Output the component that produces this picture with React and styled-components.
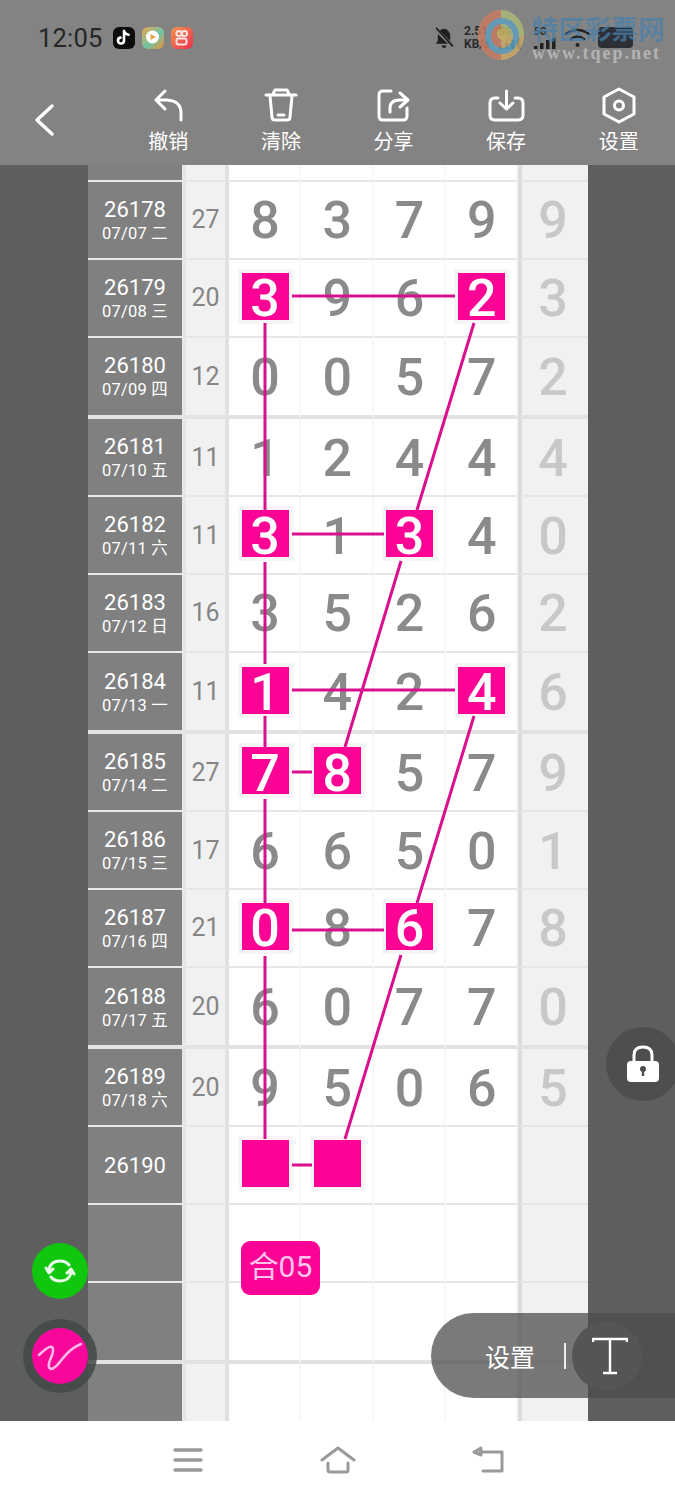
import React from 'react';
import styled, { createGlobalStyle } from 'styled-components';

const Global = createGlobalStyle`
  html, body { margin: 0; padding: 0; background: #fff; }
  * { box-sizing: border-box; }
  #root { width: 675px; height: 1500px; overflow: hidden; }
`;

const Page = styled.div`
  position: relative;
  width: 675px;
  height: 1500px;
  overflow: hidden;
  display: flex;
  flex-direction: column;
  font-family: Roboto, "Noto Sans CJK SC", sans-serif;
`;

const Top = styled.header`
  height: 165px;
  flex: none;
  background: #838383;
  display: flex;
  flex-direction: column;
`;

const StatusBar = styled.div`
  height: 75px;
  padding: 0 42px 0 38px;
  display: flex;
  align-items: center;
  gap: 7px;
  color: #262626;
`;

const Time = styled.span`
  font-size: 25.5px;
  letter-spacing: 0.2px;
  margin-right: 3px;
`;

const AppBadge = styled.span`
  width: 22px;
  height: 22px;
  border-radius: 6px;
  background: ${p => p.$bg};
  display: flex;
  align-items: center;
  justify-content: center;
  flex: none;
`;

const StatusRight = styled.div`
  margin-left: auto;
  display: flex;
  align-items: center;
`;

const BellSlot = styled.span`
  width: 31px;
  display: flex;
`;

const Speed = styled.span`
  font-size: 12px;
  line-height: 13px;
  font-weight: 700;
  width: 35px;
  color: #2a2a2a;
`;

const NetGroup = styled.span`
  width: ${p => p.$w}px;
  display: flex;
  flex-direction: column;
  gap: 1px;
  font-size: 10px;
  line-height: 10px;
  font-weight: 700;
  color: #2a2a2a;
`;

const Battery = styled.span`
  width: 35px;
  height: 21px;
  border-radius: 4px;
  background: #2c3036;
  margin-left: 7px;
`;

const Toolbar = styled.nav`
  height: 90px;
  display: flex;
  align-items: stretch;
`;

const Back = styled.button`
  width: 112px;
  border: 0;
  background: none;
  padding: 0 0 0 34px;
  display: flex;
  align-items: center;
  justify-content: flex-start;
`;

const Tool = styled.div`
  width: 112.6px;
  display: flex;
  flex-direction: column;
  align-items: center;
  padding-top: 12px;
  color: #fff;
  font-size: 20px;
  line-height: 26px;
`;

const ToolIcon = styled.span`
  height: 36px;
  margin-bottom: 6px;
  display: flex;
  align-items: center;
  justify-content: center;
`;

const Board = styled.main`
  position: relative;
  flex: 1;
  min-height: 0;
  display: flex;
  background: #5e5e5e;
  overflow: hidden;
`;

const Table = styled.div`
  margin-left: 88px;
  width: 500px;
  flex: none;
  display: flex;
  flex-direction: column;
`;

const Row = styled.div`
  flex: none;
  height: ${p => p.$h}px;
  display: grid;
  grid-template-columns: 94px 47px repeat(4, 72.25px) 70px;
`;

const IssueCell = styled.div`
  background: #808080;
  color: #fff;
  border-bottom: ${p => (p.$end ? '4px solid #e4e4e4' : '2px solid #e8e8e8')};
  display: flex;
  flex-direction: column;
  align-items: center;
  justify-content: center;
  padding-top: 1px;
`;

const Issue = styled.div`
  font-size: 22px;
  line-height: 27px;
`;

const DateText = styled.div`
  font-size: 16.5px;
  line-height: 22px;
  letter-spacing: 0.2px;
`;

const SumCell = styled.div`
  background: #f1f1f1;
  border-left: 4px solid #e6e6e6;
  border-right: 4px solid #e2e2e2;
  border-bottom: ${p => (p.$end ? '4px solid #e2e2e2' : '2px solid #e6e6e6')};
  color: #858585;
  font-size: 25px;
  display: flex;
  align-items: center;
  justify-content: center;
`;

const NumCell = styled.div`
  background: #fff;
  border-right: 2px solid #f7f7f7;
  border-bottom: ${p => (p.$end ? '4px solid #e2e2e2' : '2px solid #e6e6e6')};
  padding: 2px 0 0 2px;
  color: #8a8a8a;
  font-size: 52px;
  font-weight: 500;
  display: flex;
  align-items: center;
  justify-content: center;
`;

const Marked = styled.div`
  width: 47px;
  height: 47px;
  background: #fb0495;
  color: #fff;
  font-weight: 500;
  box-shadow: 0 0 0 4px #f9f4f8;
  padding-top: 5px;
  display: flex;
  align-items: center;
  justify-content: center;
  margin-bottom: 5px;
`;

const TailCell = styled.div`
  background: #f1f1f1;
  border-left: 4px solid #dcdcdc;
  border-bottom: ${p => (p.$end ? '4px solid #e2e2e2' : '2px solid #e6e6e6')};
  padding: 2px 4px 0 0;
  color: #c8c8c8;
  font-size: 52px;
  font-weight: 500;
  display: flex;
  align-items: center;
  justify-content: center;
`;

const Lines = styled.svg`
  position: absolute;
  left: 0;
  top: 0;
  pointer-events: none;
`;

const Tag = styled.div`
  position: absolute;
  left: 241px;
  top: 1076px;
  width: 79px;
  height: 54px;
  border-radius: 9px;
  background: #fb0495;
  color: #ffc4ec;
  font-size: 30px;
  padding-bottom: 8px;
  display: flex;
  align-items: center;
  justify-content: center;
`;

const RoundButton = styled.div`
  position: absolute;
  left: ${p => p.$x - 28}px;
  top: ${p => p.$y - 28}px;
  width: 56px;
  height: 56px;
  border-radius: 50%;
  background: ${p => p.$bg};
  box-shadow: ${p => (p.$halo ? '0 0 0 9px rgba(66,72,72,.85)' : 'none')};
  display: flex;
  align-items: center;
  justify-content: center;
`;

const LockButton = styled.div`
  position: absolute;
  left: 606px;
  top: 862px;
  width: 74px;
  height: 74px;
  border-radius: 50%;
  background: #4e4e4e;
  display: flex;
  align-items: center;
  justify-content: center;
`;

const TextPill = styled.div`
  position: absolute;
  left: 431px;
  right: 0;
  top: 1148px;
  height: 85px;
  border-radius: 43px 0 0 43px;
  background: rgba(75, 75, 75, 0.74);
  color: #fff;
  display: flex;
  align-items: center;
  padding-left: 54px;
  font-size: 25px;
`;

const PillDivider = styled.span`
  width: 2px;
  height: 26px;
  background: #eee;
  margin-left: 29px;
`;

const TextKnob = styled.span`
  width: 70px;
  height: 70px;
  border-radius: 50%;
  background: #555;
  margin-left: 6px;
  padding-left: 6px;
  display: flex;
  align-items: center;
  justify-content: center;
`;

const BottomNav = styled.footer`
  height: 79px;
  flex: none;
  background: #fff;
  display: flex;
  align-items: center;
  justify-content: center;
  padding-bottom: 1px;
`;

const NavSlot = styled.div`
  width: 150px;
  display: flex;
  justify-content: center;
`;

const Watermark = styled.div`
  position: absolute;
  left: 476px;
  top: 8px;
  width: 199px;
  height: 70px;
  display: flex;
  pointer-events: none;
`;

const WmText = styled.div`
  margin-left: 4px;
  padding-top: 8px;
`;

const WmTitle = styled.div`
  font-size: 26.5px;
  line-height: 28px;
  font-weight: 700;
  color: rgba(74, 128, 172, 0.72);
  white-space: nowrap;
`;

const WmUrl = styled.div`
  font-family: "Liberation Serif", serif;
  font-size: 18px;
  line-height: 19px;
  font-weight: 700;
  color: rgba(190, 190, 190, 0.85);
  letter-spacing: 2px;
  white-space: nowrap;
`;

const rows = [
  ['26178', '07/07 二', 27, [8, 3, 7, 9], 9, []],
  ['26179', '07/08 三', 20, [3, 9, 6, 2], 3, [0, 3]],
  ['26180', '07/09 四', 12, [0, 0, 5, 7], 2, [], true],
  ['26181', '07/10 五', 11, [1, 2, 4, 4], 4, []],
  ['26182', '07/11 六', 11, [3, 1, 3, 4], 0, [0, 2]],
  ['26183', '07/12 日', 16, [3, 5, 2, 6], 2, []],
  ['26184', '07/13 一', 11, [1, 4, 2, 4], 6, [0, 3], true],
  ['26185', '07/14 二', 27, [7, 8, 5, 7], 9, [0, 1]],
  ['26186', '07/15 三', 17, [6, 6, 5, 0], 1, []],
  ['26187', '07/16 四', 21, [0, 8, 6, 7], 8, [0, 2]],
  ['26188', '07/17 五', 20, [6, 0, 7, 7], 0, [], true],
  ['26189', '07/18 六', 20, [9, 5, 0, 6], 5, []],
  ['26190', '', '', ['', '', '', ''], '', [0, 1]],
  ['', '', '', ['', '', '', ''], '', []],
  ['', '', '', ['', '', '', ''], '', [], true],
  ['', '', '', ['', '', '', ''], '', []],
];

const segments = [
  [265, 323, 265, 510],
  [265, 562, 265, 664],
  [265, 716, 265, 747],
  [265, 799, 265, 904],
  [265, 956, 265, 1139],
  [292, 296, 455, 296],
  [474, 323, 417, 510],
  [292, 534, 384, 534],
  [401, 561, 345, 747],
  [292, 690, 455, 690],
  [292, 772, 312, 772],
  [474, 716, 417, 903],
  [292, 930, 384, 930],
  [401, 955, 345, 1139],
  [292, 1165, 312, 1165],
];

const Stroke = ({ w, h, children, sw = 3, color = '#fff', ...rest }) => (
  <svg width={w} height={h} viewBox={`0 0 ${w} ${h}`} fill="none" stroke={color} strokeWidth={sw} strokeLinecap="round" strokeLinejoin="round" {...rest}>
    {children}
  </svg>
);

const Bars = () => (
  <svg width="24" height="11" viewBox="0 0 24 11" fill="#222">
    <rect x="0" y="8" width="3.5" height="3" />
    <rect x="6" y="5" width="3.5" height="6" />
    <rect x="12" y="2" width="3.5" height="9" />
    <rect x="18" y="0" width="3.5" height="11" />
  </svg>
);

export default function App() {
  return (
    <Page>
      <Global />
      <Top>
        <StatusBar>
          <Time>12:05</Time>
          <AppBadge $bg="#0b0b0b">
            <svg width="15" height="17" viewBox="0 0 15 17" fill="none" stroke="#fff" strokeWidth="2.6" strokeLinecap="round"><path d="M8 2V11.5A3 3 0 1 1 4.5 8.6M8 2.2Q9 5.4 12.6 5.8" /></svg>
          </AppBadge>
          <AppBadge $bg="linear-gradient(135deg, #f2a24a 0%, #6fc7a6 55%, #ee8a2c 100%)">
            <svg width="17" height="17" viewBox="0 0 17 17"><circle cx="8.5" cy="8" r="6.5" fill="#fff" /><path d="M6.5 5 12 8 6.5 11Z" fill="#e8a04c" /></svg>
          </AppBadge>
          <AppBadge $bg="linear-gradient(135deg, #f0954c, #ec2f4e)">
            <svg width="15" height="17" viewBox="0 0 15 17" fill="none" stroke="#fde4e4" strokeWidth="2"><circle cx="5" cy="4.5" r="2.6" /><circle cx="10.5" cy="4.5" r="2.6" /><rect x="2.5" y="9.5" width="10" height="6" rx="2" /></svg>
          </AppBadge>
          <StatusRight>
            <BellSlot>
              <svg width="22" height="23" viewBox="0 0 22 26" fill="#1f1f1f">
                <path d="M11 3Q4 4 4 12V17L1.5 20H20.5L18 17V12Q18 4 11 3ZM8 22H14Q13 25 11 25 9 25 8 22Z" />
                <path d="M1 3 21 23" stroke="#838383" strokeWidth="4" />
                <path d="M2 2 21 23" stroke="#1f1f1f" strokeWidth="2" />
              </svg>
            </BellSlot>
            <Speed>2.51<br />KB/s</Speed>
            <NetGroup $w={35}>5G<Bars /></NetGroup>
            <NetGroup $w={30}>5G<Bars /></NetGroup>
            <svg width="27" height="20" viewBox="0 0 27 20" fill="none" stroke="#222" strokeWidth="2.6" strokeLinecap="round"><path d="M2 6Q13.500 -2 25 6M7 11Q13.500 6 20 11" /><circle cx="13.500" cy="17" r="2" fill="#222" stroke="none" /></svg>
            <Battery />
          </StatusRight>
        </StatusBar>
        <Toolbar>
          <Back aria-label="返回">
            <Stroke w={21} h={34} sw={3.4}><path d="M18 3 3 17 18 31" /></Stroke>
          </Back>
          <Tool>
            <ToolIcon>
              <Stroke w={30} h={33}><path d="M12 2 3 11 12 20M3 11H14Q28 12 28 24V31" /></Stroke>
            </ToolIcon>
            撤销
          </Tool>
          <Tool>
            <ToolIcon>
              <Stroke w={34} h={34}><path d="M2 7H32M9 6 11 2H23L25 6M6 8 8 29Q8 32 11 32H23Q26 32 26 29L28 8M14 27H20" /></Stroke>
            </ToolIcon>
            清除
          </Tool>
          <Tool>
            <ToolIcon>
              <Stroke w={33} h={33}><path d="M14 2H6Q2 2 2 6V27Q2 31 6 31H26Q30 31 30 27V19M13 23V19Q13 11 23 11H30M23 4 31 11 23 18" /></Stroke>
            </ToolIcon>
            分享
          </Tool>
          <Tool>
            <ToolIcon>
              <Stroke w={37} h={33}><path d="M10 9H7Q2 9 2 14V26Q2 31 7 31H30Q35 31 35 26V14Q35 9 30 9H27M18.500 2V20M12 14 18.500 20 25 14" /></Stroke>
            </ToolIcon>
            保存
          </Tool>
          <Tool>
            <ToolIcon>
              <Stroke w={34} h={37}><path d="M17 2 32 10V27L17 35 2 27V10Z" /><circle cx="17" cy="18.500" r="4.500" /></Stroke>
            </ToolIcon>
            设置
          </Tool>
        </Toolbar>
      </Top>

      <Board>
        <Table>
          <Row $h={17}>
            <IssueCell /><SumCell /><NumCell /><NumCell /><NumCell /><NumCell /><TailCell />
          </Row>
          {rows.map(([issue, date, sum, nums, tail, marks, end], i) => (
            <Row key={i} $h={end ? 81.4 : 77.9}>
              <IssueCell $end={end}>
                <Issue>{issue}</Issue>
                {date && <DateText>{date}</DateText>}
              </IssueCell>
              <SumCell $end={end}>{sum}</SumCell>
              {nums.map((n, c) => (
                <NumCell key={c} $end={end}>
                  {marks.includes(c) ? <Marked>{n}</Marked> : n}
                </NumCell>
              ))}
              <TailCell $end={end}>{tail}</TailCell>
            </Row>
          ))}
        </Table>

        <Lines width="675" height="1256" viewBox="0 165 675 1256" fill="none" stroke="#d90f8d" strokeWidth="3">
          {segments.map(([a, b, c, d], i) => <line key={i} x1={a} y1={b} x2={c} y2={d} />)}
        </Lines>

        <Tag>合05</Tag>

        <RoundButton $x={60} $y={1106} $bg="#10c60e">
          <Stroke w={32} h={32} sw={3} color="#e8fde8">
            <path d="M5 14Q7 6 16 6 22 6 25 10M27 18Q25 26 16 26 10 26 7 22" />
            <path d="M2 13 5 18 9 14M30 19 27 14 23 18" fill="#e8fde8" />
          </Stroke>
        </RoundButton>
        <RoundButton $x={60} $y={1191} $bg="#f7089a" $halo>
          <Stroke w={46} h={36} sw={2.6} color="#ffb8ea">
            <path d="M2 17Q12 7 15 9 18 12 13 22 10 30 14 31 18 31 26 20 34 10 44 6" />
          </Stroke>
        </RoundButton>

        <LockButton>
          <svg width="34" height="40" viewBox="0 0 34 40">
            <path d="M8 17V11Q8 3 17 3 26 3 26 11V17" fill="none" stroke="#fff" strokeWidth="3" />
            <rect x="1" y="17" width="32" height="21" rx="4" fill="#fff" />
            <circle cx="17" cy="25" r="3" fill="#4e4e4e" />
            <rect x="15.800" y="26" width="2.400" height="6" fill="#4e4e4e" />
          </svg>
        </LockButton>

        <TextPill>
          设置
          <PillDivider />
          <TextKnob>
            <svg width="36" height="38" viewBox="0 0 36 38" fill="none" stroke="#fff" strokeWidth="2.4">
              <path d="M1 5V2H35V5M18 2V36M11 36H25" />
            </svg>
          </TextKnob>
        </TextPill>
      </Board>

      <BottomNav>
        <NavSlot>
          <Stroke w={30} h={24} sw={3.4} color="#9a9a9a"><path d="M2 2H28M2 12H28M2 22H28" /></Stroke>
        </NavSlot>
        <NavSlot>
          <Stroke w={36} h={28} sw={3} color="#9a9a9a"><path d="M2 14 18 2 34 14M8 17V24Q8 26 10 26H26Q28 26 28 24V17" /></Stroke>
        </NavSlot>
        <NavSlot>
          <Stroke w={32} h={28} sw={3} color="#9a9a9a"><path d="M9 2 2 6 9 9ZM8 6H30V25H11" fill="none" /></Stroke>
        </NavSlot>
      </BottomNav>

      <Watermark>
        <svg width="52" height="54" viewBox="0 0 52 54" opacity="0.85">
          <ellipse cx="25" cy="27" rx="23" ry="25" fill="#c9a96a" />
          <path d="M25 2A23 25 0 0 0 2 27 23 25 0 0 0 25 52Z" fill="#c77a62" />
          <path d="M25 2A23 25 0 0 1 48 27H25Z" fill="#a9b878" />
          <ellipse cx="26" cy="28" rx="14" ry="15" fill="none" stroke="#5f9fc0" strokeWidth="6" />
          <circle cx="27" cy="26" r="6" fill="#c8b35e" />
        </svg>
        <WmText>
          <WmTitle>特区彩票网</WmTitle>
          <WmUrl>www.tqep.net</WmUrl>
        </WmText>
      </Watermark>
    </Page>
  );
}
